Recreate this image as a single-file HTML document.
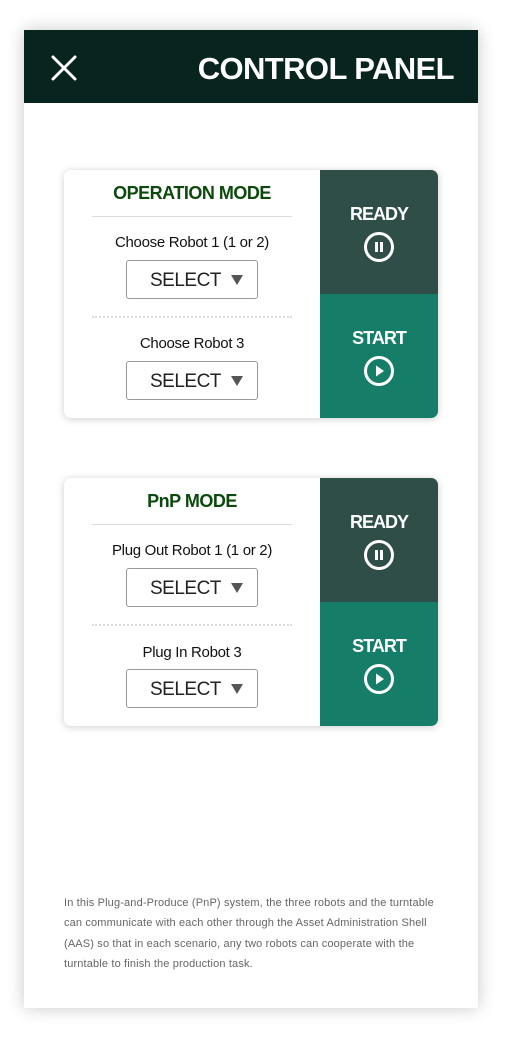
<!DOCTYPE html>
<html><head><style>
*{margin:0;padding:0;box-sizing:border-box}
body{width:514px;height:1038px;background:#fff;font-family:"Liberation Sans",sans-serif;position:relative;overflow:hidden}
.page{position:absolute;left:24px;top:30px;width:454px;height:978px;background:#fff;box-shadow:0 0 16px rgba(0,0,0,.22)}
.hdr{position:absolute;left:0;top:0;width:454px;height:73px;background:#08241f}
.hdr .t{position:absolute;right:24px;top:21px;color:#fff;font-weight:bold;font-size:31px;letter-spacing:-.6px}
.card{position:absolute;left:64px;width:374px;height:248px;background:#fff;border-radius:7px;box-shadow:0 1px 8px rgba(0,0,0,.2);overflow:hidden}
.ttl{position:absolute;left:0;width:256px;top:13px;text-align:center;color:#0b4a0c;font-weight:bold;font-size:18px;letter-spacing:-.5px}
.ln{position:absolute;left:28px;width:200px;top:46px;border-top:1px solid #ddd}
.dl{position:absolute;left:28px;width:200px;top:146px;border-top:2px dotted #ddd}
.lb{position:absolute;left:0;width:256px;text-align:center;font-size:15px;color:#111;letter-spacing:-.3px}
.sel{position:absolute;left:62px;width:132px;height:39px;border:1px solid #999;border-radius:3px;font-size:19px;color:#222;padding:9px 0 0 23px;letter-spacing:-.5px}
.sel:after{content:"";position:absolute;right:14px;top:14px;border-left:6px solid transparent;border-right:6px solid transparent;border-top:10px solid #555}
.rd,.st{position:absolute;left:256px;width:118px;height:124px;color:#fff;text-align:center;font-weight:bold;font-size:18px;letter-spacing:-1px;padding-top:34px}
.rd{top:0;background:#2e4e47}.st{top:124px;background:#167e68}
.rd svg,.st svg{display:block;margin:6px auto 0}
.txt{position:absolute;left:64px;top:893px;font-size:11px;line-height:20.3px;color:#666;letter-spacing:.15px;white-space:nowrap}
</style></head><body>
<div class="page">
<div class="hdr">
<svg style="position:absolute;left:27px;top:25px" width="26" height="26" viewBox="0 0 26 26"><path d="M2 2L24 24M24 2L2 24" stroke="#fff" stroke-width="3" stroke-linecap="round"/></svg>
<div class="t">CONTROL PANEL</div>
</div>
</div>

<div class="card" style="top:170px">
<div class="ttl">OPERATION MODE</div><div class="ln"></div>
<div class="lb" style="top:64px">Choose Robot 1 (1 or 2)</div>
<div class="sel" style="top:90px">SELECT</div>
<div class="dl"></div>
<div class="lb" style="top:165px">Choose Robot 3</div>
<div class="sel" style="top:191px">SELECT</div>
<div class="rd">READY<svg width="32" height="32" viewBox="0 0 32 32"><circle cx="16" cy="16" r="13.5" fill="none" stroke="#fff" stroke-width="3"/><rect x="12" y="11" width="3" height="10" fill="#fff"/><rect x="17" y="11" width="3" height="10" fill="#fff"/></svg></div>
<div class="st">START<svg width="32" height="32" viewBox="0 0 32 32"><circle cx="16" cy="16" r="13.5" fill="none" stroke="#fff" stroke-width="3"/><path d="M13 10.5L21 16L13 21.5Z" fill="#fff"/></svg></div>
</div>

<div class="card" style="top:478px">
<div class="ttl">PnP MODE</div><div class="ln"></div>
<div class="lb" style="top:64px">Plug Out Robot 1 (1 or 2)</div>
<div class="sel" style="top:90px">SELECT</div>
<div class="dl"></div>
<div class="lb" style="top:166px">Plug In Robot 3</div>
<div class="sel" style="top:191px">SELECT</div>
<div class="rd">READY<svg width="32" height="32" viewBox="0 0 32 32"><circle cx="16" cy="16" r="13.5" fill="none" stroke="#fff" stroke-width="3"/><rect x="12" y="11" width="3" height="10" fill="#fff"/><rect x="17" y="11" width="3" height="10" fill="#fff"/></svg></div>
<div class="st">START<svg width="32" height="32" viewBox="0 0 32 32"><circle cx="16" cy="16" r="13.5" fill="none" stroke="#fff" stroke-width="3"/><path d="M13 10.5L21 16L13 21.5Z" fill="#fff"/></svg></div>
</div>

<div class="txt">In this Plug-and-Produce (PnP) system, the three robots and the turntable<br>can communicate with each other through the Asset Administration Shell<br>(AAS) so that in each scenario, any two robots can cooperate with the<br>turntable to finish the production task.</div>
</body></html>
